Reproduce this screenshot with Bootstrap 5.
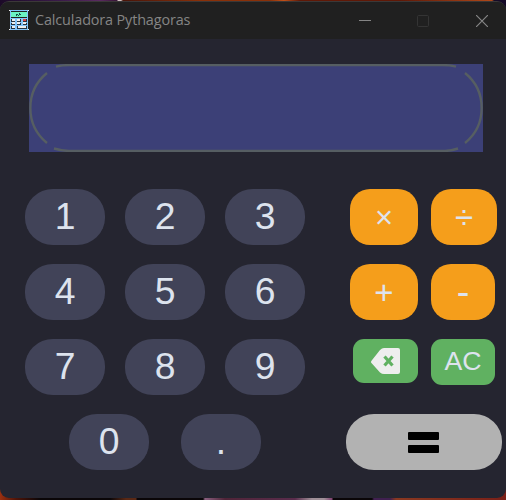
<!DOCTYPE html>
<html lang="es">
<head>
<meta charset="utf-8">
<meta name="viewport" content="width=device-width, initial-scale=1">
<title>Calculadora Pythagoras</title>
<link href="https://cdn.jsdelivr.net/npm/bootstrap@5.3.0/dist/css/bootstrap.min.css" rel="stylesheet">
<style>
body{width:506px;height:500px;padding-top:1px;background:
 linear-gradient(90deg,#1c0a28 0,#3a1a4a 60px,#5a2a60 100px,#3a1438 117px,#d0c0c0 118px,#d0c0c0 121px,#4a1408 123px,#8a3008 200px,#8a3008 270px,#c05018 284px,#601806 300px,#601806 400px,#b04818 492px,#150a28 494px) 0 0/506px 12px no-repeat,
 linear-gradient(90deg,#9a3010 0,#501408 16px,#0a0608 40px,#0a0608 110px,#5a2814 126px,#5a2814 136px,#0a0608 137px,#0a0608 203px,#8a6080 205px,#502438 225px,#5a2c4c 295px,#a09098 312px,#a09098 324px,#804070 332px,#0a0608 333px,#0a0608 372px,#402050 374px,#402050 390px,#8a3820 396px,#7a2018 100%) 0 488px/506px 12px no-repeat,#252530}
.calc-window{width:506px;height:497px;border-radius:9px;background:#252530;border-top:1px solid #3b3838}
.title-bar{height:37px;background:#202020;color:#858585;padding-left:9px}
.app-icon{margin-bottom:1px}
.title-text{font:14.4px/18px "Open Sans","Noto Sans",sans-serif;margin-left:6px;letter-spacing:-.13px;padding-bottom:1px}
.win-icons{padding-right:18px}
.win-max{margin:0 47px 0 46px}
.display-panel{width:454px;height:88px;margin:25px 0 0 29px;background:#3c4077}
.keypad{padding:37px 0 0 25px}
.numbers{width:280px;row-gap:19px}
.actions{width:160px;margin-left:45px;row-gap:19px}
.calc-key{height:56px;width:80px;border:0;border-radius:28px/27px;padding:0 0 2px;background:#414358;color:#dde3ee;font:37.3px/54px "Liberation Sans",Arial,sans-serif}
.op-key{width:68px;border-radius:20px;background:#f59e1b;font-size:33px;padding:2px 0 0}
.mul-key{font-size:31px}
.div-key{width:66px}
.minus-key{width:64px;font-size:38px;padding:0}
.green-key{width:64px;height:46px;border-radius:11px;background:#60b161;font-size:26.7px;line-height:44px}
.erase-key{width:65px;height:44px;margin-left:3px;padding:0 1px 0 0}
.op-key+.op-key,.ac-key{margin-left:13px}
.equals-key{width:156px;background:#b2b2b2;margin-left:-4px;padding:1px 1px 0 0}
.key-row{height:56px}
.zero-row{padding:0 44px}
</style>
</head>
<body class="m-0 overflow-hidden">
<main class="calc-window overflow-hidden">
<header class="title-bar d-flex align-items-center justify-content-between">
 <div class="d-flex align-items-center">
  <svg class="app-icon" width="20" height="20" shape-rendering="crispEdges">
   <path fill="#83c5fb" d="M1 0h18v20H1z"/><path fill="#202020" d="M2 1h16v7H2z"/>
   <path fill="#6af2c2" d="M2 2h16v5H2z"/><path fill="#164b45" d="M7 4h2v1H7zM10 3h1v2h-1zM9 5h1v1H9zM7 5h1v1H7zM11 4h1v1h-1z"/>
   <path fill="#26333f" d="M2 9h4v3H2zM8 9h4v3H8zM14 9h4v3h-4zM2 13h4v2H2zM8 13h4v2H8zM14 13h4v2h-4zM2 16h4v3H2zM8 16h10v3H8z"/>
   <path fill="#eee" d="M3 9h3v2H3zM8 9h3v2H8zM3 12h3v2H3zM8 12h3v2H8zM14 12h3v2h-3zM3 16h3v2H3zM9 16h8v2H9zM0 0h1v1H0zM19 0h1v1h-1zM0 19h1v1H0zM19 19h1v1h-1z"/><path fill="#dc4141" d="M14 9h3v2h-3z"/>
  </svg>
  <span class="title-text">Calculadora Pythagoras</span>
 </div>
 <div class="win-icons d-flex align-items-center">
  <svg width="12" height="12"><path stroke="#858585" d="M0 5.5h12"/></svg>
  <svg class="win-max" width="12" height="12"><rect x=".5" y=".5" width="11" height="11" rx="1" fill="none" stroke="#343434"/></svg>
  <svg width="12" height="12"><path stroke="#858585" stroke-width="1.2" d="M0 0l12 12M12 0L0 12"/></svg>
 </div>
</header>
<section class="display-panel" aria-label="Pantalla">
 <svg class="d-block" width="454" height="88" fill="none" stroke="#565e62" stroke-width="2.4">
  <path d="M27 2.6Q33 1.1 40 1.1H414Q421 1.1 427 2.6M25 84.5Q33 86.9 40 86.9H416Q422 86.9 429 84.5M18 9C-4.2 27-4.2 61 18 79M436 9C458.2 27 458.2 61 436 79"/>
 </svg>
</section>
<section class="keypad d-flex align-items-start">
 <div class="numbers d-flex flex-column flex-shrink-0">
  <div class="key-row d-flex justify-content-between"><button class="calc-key">1</button><button class="calc-key">2</button><button class="calc-key">3</button></div>
  <div class="key-row d-flex justify-content-between"><button class="calc-key">4</button><button class="calc-key">5</button><button class="calc-key">6</button></div>
  <div class="key-row d-flex justify-content-between"><button class="calc-key">7</button><button class="calc-key">8</button><button class="calc-key">9</button></div>
  <div class="key-row zero-row d-flex justify-content-between"><button class="calc-key">0</button><button class="calc-key">.</button></div>
 </div>
 <div class="actions d-flex flex-column flex-shrink-0">
  <div class="key-row d-flex"><button class="calc-key op-key mul-key">×</button><button class="calc-key op-key div-key">÷</button></div>
  <div class="key-row d-flex"><button class="calc-key op-key">+</button><button class="calc-key op-key minus-key">-</button></div>
  <div class="key-row d-flex align-items-start"><button class="calc-key green-key erase-key d-flex align-items-center justify-content-center" aria-label="Borrar"><svg width="29" height="26"><path fill="#eee" d="M.7 15.2Q-.7 14 .7 12.4L9 2Q11 0 13 0H27Q29 0 29 2V24Q29 26 27 26H13Q11 26 9 24.5Z"/><path stroke="#60b161" stroke-width="3.2" d="M13.5 8.5l8 9M21.5 8.5l-8 9"/></svg></button><button class="calc-key green-key ac-key">AC</button></div>
  <div class="key-row d-flex"><button class="calc-key equals-key flex-shrink-0 d-flex align-items-center justify-content-center" aria-label="Igual"><svg width="31" height="21"><rect width="31" height="8" rx="1"/><rect y="13" width="31" height="8" rx="1"/></svg></button></div>
 </div>
</section>
</main>
<script src="https://cdn.jsdelivr.net/npm/bootstrap@5.3.0/dist/js/bootstrap.bundle.min.js"></script>
</body>
</html>
